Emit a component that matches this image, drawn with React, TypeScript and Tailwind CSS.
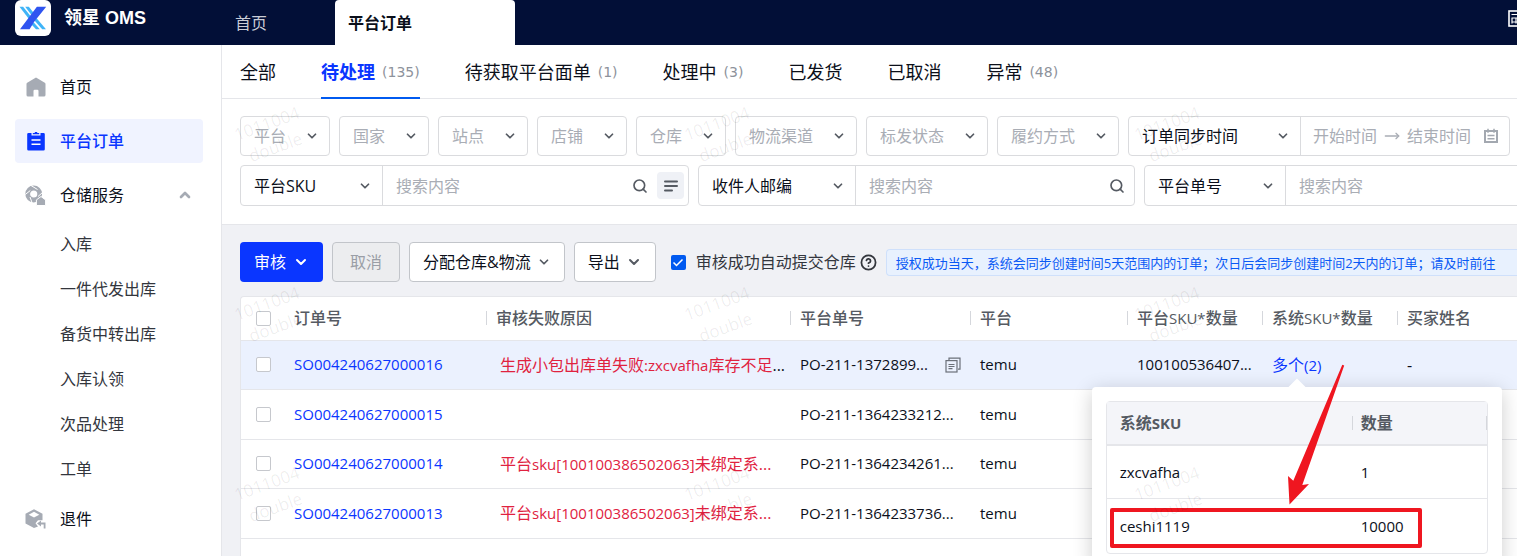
import type { ReactNode } from 'react'
import { ChevronDown, ChevronUp, CircleHelp, MoveRight, Search } from 'lucide-react'

const tabs = [
  { name: '全部' },
  { name: '待处理', count: 135, active: true },
  { name: '待获取平台面单', count: 1 },
  { name: '处理中', count: 3 },
  { name: '已发货' },
  { name: '已取消' },
  { name: '异常', count: 48 },
]

const subMenu = ['入库', '一件代发出库', '备货中转出库', '入库认领', '次品处理', '工单']

const smallFilters = ['平台', '国家', '站点', '店铺', '仓库']
const wideFilters = ['物流渠道', '标发状态', '履约方式']

const columns = ['订单号', '审核失败原因', '平台单号', '平台', '平台SKU*数量', '系统SKU*数量', '买家姓名']

const orders = [
  { id: 'SO004240627000016', reason: '生成小包出库单失败:zxcvafha库存不足', po: 'PO-211-1372899...', platform: 'temu', sku: '100100536407...', multi: true, buyer: '-' },
  { id: 'SO004240627000015', reason: '', po: 'PO-211-1364233212...', platform: 'temu' },
  { id: 'SO004240627000014', reason: '平台sku[100100386502063]未绑定系', po: 'PO-211-1364234261...', platform: 'temu' },
  { id: 'SO004240627000013', reason: '平台sku[100100386502063]未绑定系', po: 'PO-211-1364233736...', platform: 'temu' },
  { id: '', reason: '', po: '', platform: '' },
]

// Latin runs are set one step smaller than the Chinese around them
function Mixed({ text }: { text: string }) {
  const parts = text.split(/([\x21-\x7e]+)/)
  return (
    <>
      {parts.map((p, i) => (i % 2 ? <span key={i} className="text-[15px]">{p}</span> : p))}
    </>
  )
}

function LogoIcon() {
  return (
    <svg viewBox="0 0 36 36" className="size-9">
      <path d="M4.500 6.700h3.600l8.600 10.800-2 2.600z" fill="#3fb4f7" />
      <path d="M10.200 6.700h3.600l5 6.200-2 2.700z" fill="#3fb4f7" />
      <path d="M21.600 18.200l9.400 11.100h-3.800l-7.500-8.600z" fill="#3fb4f7" />
      <path d="M18.600 22.200l6.200 7.100H21l-4.300-4.600z" fill="#3fb4f7" />
      <path d="M21.900 6.700h9.300L19 22 14.600 29.300H5z" fill="#2f54f0" />
    </svg>
  )
}

function HomeIcon() {
  return (
    <svg viewBox="0 0 20 20" className="size-5" fill="#a6abb4">
      <path d="M10 .4 18.800 5.700q.7.5.7 1.300V18q0 1.600-1.600 1.600H12.500V14q0-1.200-1.200-1.200H8.700Q7.500 12.800 7.500 14v5.600H2.100Q.5 19.600.5 18V7q0-.8.7-1.300z" />
    </svg>
  )
}

function OrderIcon() {
  return (
    <svg viewBox="0 0 20 20" className="size-5">
      <path d="M2.500 2h3v2.500h9V2h3q1.300 0 1.300 1.300v14.900q0 1.300-1.300 1.300h-15q-1.300 0-1.300-1.300V3.300Q1.200 2 2.500 2z" fill="#0a36ff" />
      <path d="M6.800 2h2V1h2.400v1h2v1.300H6.800z" fill="#0a36ff" />
      <path d="M5.500 9h9M5.500 13.300h9" stroke="#fff" strokeWidth="1.400" />
    </svg>
  )
}

function WarehouseIcon() {
  return (
    <svg viewBox="0 0 21 21" className="size-[21px]">
      <circle cx="8.700" cy="9" r="6" fill="none" stroke="#a6abb4" strokeWidth="4.800" />
      <path d="M6 .5l6.500 4M17.500 7.500l-4.500 4M.3 9.500l5-4M7 17.500 5 12" stroke="#fff" strokeWidth="1" />
      <path d="M16 11.500l4.600 3.400v5.600h-9.200v-5.600z" fill="#a6abb4" stroke="#fff" strokeWidth="1" />
    </svg>
  )
}

function ReturnIcon() {
  return (
    <svg viewBox="0 0 21 21" className="size-[21px]">
      <path d="M9 .3l8.500 4.500v6.500H13l-2.500 3 2.500 3.200L9 19 .5 14.500V4.800z" fill="#a6abb4" />
      <path d="M9 2.800l5.300 2.900L9 8.600 3.700 5.700z" fill="#fff" />
      <path d="M12 14.500l4-3v2h4.500v6h-1.800v-4H16v2z" fill="#a6abb4" />
    </svg>
  )
}

function CopyIcon() {
  return (
    <svg viewBox="0 0 16 16" className="size-4" fill="none" stroke="#6b7079" strokeWidth="1.200">
      <path d="M4 3.200V1.200h11v11h-2" />
      <rect x="1" y="3.600" width="11" height="11.400" />
      <path d="M3.500 7.500h6M3.500 9.500h6M3.500 11.700h4" />
    </svg>
  )
}

function CalendarIcon() {
  return (
    <svg viewBox="0 0 16 16" className="size-4 shrink-0" fill="none" stroke="#a3a8b0" strokeWidth="2">
      <rect x="2" y="3" width="12" height="11" />
      <path d="M5 .8v4M11 .8v4M4.500 7.500h7M4.500 10.800h7" strokeWidth="1.500" />
    </svg>
  )
}

function GridIcon() {
  return (
    <svg viewBox="0 0 17 17" className="size-[17px] shrink-0" fill="none" stroke="#fff" strokeWidth="1.600">
      <rect x="1" y="1" width="15" height="15" />
      <path d="M3.500 4.500h10M3.500 8h10M3.500 12h10M4 8v5.500M8 8v5.500" strokeWidth="1.200" />
    </svg>
  )
}

function Dropdown({ label, size, dark }: { label: string; size: string; dark?: boolean }) {
  return (
    <div className={`relative h-full shrink-0 ${size}`}>
      <select
        aria-label={label}
        className={`h-full w-full appearance-none bg-transparent pl-[13px] text-base outline-none ${dark ? 'text-[#0b0f1a]' : 'text-[#a9adb5]'}`}
      >
        <option>{label}</option>
      </select>
      <ChevronDown size={14} strokeWidth={3} className="pointer-events-none absolute top-1/2 right-2.5 -translate-y-1/2 text-[#555a62]" />
    </div>
  )
}

const box = 'flex shrink-0 items-center rounded border border-[#dadbde] bg-white'

function SearchBox({ label, size, selectSize, children }: { label: string; size: string; selectSize: string; children?: ReactNode }) {
  return (
    <div className={`${box} h-[41px] ${size}`}>
      <Dropdown label={label} size={selectSize} dark />
      <input
        aria-label={`${label}搜索`}
        placeholder="搜索内容"
        className="h-full min-w-0 flex-1 border-l border-[#dadbde] pl-[13px] text-base outline-none placeholder:text-[#a9adb5]"
      />
      <button aria-label="搜索" className="mr-[9px] text-[#555a62]">
        <Search size={16} strokeWidth={2.500} />
      </button>
      {children}
    </div>
  )
}

function Sidebar() {
  const item = 'mb-2.5 flex h-11 items-center gap-3.5 rounded pl-[11px]'
  return (
    <aside className="w-[222px] shrink-0 border-r border-[#e5e6ea] bg-white pt-5 pr-[18px] pl-[15px] text-base text-[#0b0f1a]">
      <nav>
        <a href="#" className={item}><HomeIcon />首页</a>
        <a href="#" className={`${item} bg-[#f0f3ff] font-medium text-[#0a36ff]`}><OrderIcon />平台订单</a>
        <button className="flex h-11 w-full items-center gap-3.5 pr-2.5 pl-2.5">
          <WarehouseIcon />仓储服务
          <ChevronUp size={16} strokeWidth={4} className="ml-auto text-[#a6abb4]" />
        </button>
        <div className="pt-1 pb-1.5">
          {subMenu.map((m) => (
            <a key={m} href="#" className="flex h-[45px] items-center pl-[45px] text-[#33363d]">{m}</a>
          ))}
        </div>
        <a href="#" className="flex h-11 items-center gap-3.5 pl-2.5"><ReturnIcon />退件</a>
      </nav>
    </aside>
  )
}

function SkuPopover() {
  const sep = 'h-3.5 border-l border-[#d5d7dc]'
  return (
    <div className="absolute top-full left-1/2 z-10 mt-2.5 w-[410px] -translate-x-1/2 rounded bg-white p-3.5 text-[#0b0f1a] shadow-[0_4px_20px_rgba(0,0,0,0.2)]">
      <div className="absolute -top-1.5 left-1/2 size-3 -translate-x-1/2 rotate-45 bg-white" />
      <div className="relative rounded border border-[#e5e6ea]">
        <table className="w-full table-fixed text-left">
          <colgroup>
            <col className="w-[245px]" />
            <col />
          </colgroup>
          <thead>
            <tr className="h-[43px] border-b-2 border-[#e5e6ea] bg-[#f4f5f9] text-[#555a62]">
              <th className="pl-[13px] font-bold"><Mixed text="系统SKU" /></th>
              <th className="font-bold">
                <div className="flex items-center gap-2">
                  <span className={sep} />数量<span className={`ml-auto ${sep}`} />
                </div>
              </th>
            </tr>
          </thead>
          <tbody className="text-[15px]">
            <tr className="h-[54px] border-b border-[#e5e6ea]"><td className="pl-[13px]">zxcvafha</td><td className="pl-[9px]">1</td></tr>
            <tr className="h-[54px]"><td className="pl-[13px]">ceshi1119</td><td className="pl-[9px]">10000</td></tr>
          </tbody>
        </table>
      </div>
      {/* red marks over the second row */}
      <div className="absolute top-[121px] left-[18px] h-10 w-[312px] rounded-xs border-4 border-[#ef1620]" />
      <svg viewBox="0 0 70 150" className="absolute -top-[26px] left-[191px] h-[150px] w-[70px]">
        <path d="M59.300 3.800l1.900.7L19.300 124l6.700-1L6.500 143.500 5 115l5.300 4.800z" fill="#ef1620" />
      </svg>
    </div>
  )
}

const check = 'block size-[15px] appearance-none rounded-xs border border-[#c6c8cd] bg-white'

function OrderTable() {
  return (
    <div className="mt-3.5 ml-[18px] rounded-tl border-t border-l border-[#e5e6ea] bg-white">
      <table className="w-full table-fixed text-left text-base text-[#0b0f1a]">
        <colgroup>
          <col className="w-[43px]" />
          <col className="w-[202px]" />
          <col className="w-[304px]" />
          <col className="w-[180px]" />
          <col className="w-[157px]" />
          <col className="w-[135px]" />
          <col className="w-[135px]" />
          <col />
        </colgroup>
        <thead>
          <tr className="h-[43px] border-b border-[#e5e6ea] text-[#555a62]">
            <th className="pl-[15px]"><input type="checkbox" aria-label="全选" className={check} /></th>
            {columns.map((c, i) => (
              <th key={c} className="font-medium whitespace-nowrap">
                <div className="flex items-center">
                  <span className={`mr-[9px] h-3.5 border-l ${i ? 'border-[#d5d7dc]' : 'border-transparent'}`} />
                  <span><Mixed text={c} /></span>
                </div>
              </th>
            ))}
          </tr>
        </thead>
        <tbody>
          {orders.map((o, i) => (
            <tr key={i} className={`h-[49px] border-b border-[#e5e6ea] whitespace-nowrap even:h-[50px] ${i === 0 ? 'bg-[#ebf1fe]' : ''}`}>
              <td className="pl-[15px]">{o.id && <input type="checkbox" aria-label={o.id} className={check} />}</td>
              <td className="pl-2.5 text-[15px]"><a href="#" className="text-[#0a36ff]">{o.id}</a></td>
              <td className="pl-3.5 text-[#e0223f]">
                {o.reason && <><Mixed text={o.reason} /><span className={i === 0 ? 'text-[#0b0f1a]' : ''}>...</span></>}
              </td>
              <td className="pl-2.5 text-[15px]">
                <div className="flex items-center justify-between pr-[9px]">
                  {o.po}
                  {o.multi && <button aria-label="复制"><CopyIcon /></button>}
                </div>
              </td>
              <td className="pl-2.5 text-[15px]">{o.platform}</td>
              <td className="pl-2.5 text-[15px]">{o.sku}</td>
              <td className="pl-2.5">
                {o.multi && (
                  <div className="relative inline-block">
                    <a href="#" className="text-[#0a36ff]"><Mixed text="多个(2)" /></a>
                    <SkuPopover />
                  </div>
                )}
              </td>
              <td className="pl-2.5">{o.buyer}</td>
            </tr>
          ))}
        </tbody>
      </table>
    </div>
  )
}

function Watermark() {
  return (
    <div aria-hidden="true" className="pointer-events-none absolute inset-0 z-20 grid auto-rows-[180px] grid-cols-[repeat(3,450px)] overflow-hidden">
      {Array.from({ length: 9 }, (_, i) => (
        <div key={i} className="flex items-center">
          <div className="w-[98px] -rotate-20 text-center text-[17px] leading-[25px] font-medium text-black/7">
            1011004<br />double
          </div>
        </div>
      ))}
    </div>
  )
}

function App() {
  const outline = 'flex h-10 shrink-0 items-center gap-1.5 rounded border border-[#c2c5ca] bg-white px-[13px] text-[#0b0f1a]'
  return (
    <div className="flex h-screen flex-col overflow-hidden font-['Open_Sans','Noto_Sans_CJK_SC',sans-serif]">
      <header className="flex h-[45px] shrink-0 overflow-hidden bg-[#020f37] text-base text-white">
        <div className="flex w-[222px] items-start pl-[15px]">
          <div className="rounded-md bg-white"><LogoIcon /></div>
          <div className="ml-[13px] font-['Liberation_Sans','Noto_Sans_CJK_SC',sans-serif] text-[18px] leading-9 font-bold">领星 OMS</div>
        </div>
        <a href="#" className="flex w-[113px] items-center pl-[13px] text-[#c9ccd6]">首页</a>
        <a href="#" className="flex w-[180px] items-center rounded-t bg-white pl-[13px] font-bold text-[#0b0f1a]">平台订单</a>
        <button aria-label="报表" className="-mr-2 ml-auto flex items-start pt-2.5"><GridIcon /></button>
      </header>

      <div className="flex min-h-0 flex-1">
        <Sidebar />
        <main className="relative min-w-0 flex-1 overflow-hidden bg-[#f0f1f5]">
          <nav className="flex h-[54px] gap-[45px] border-b border-[#e5e6ea] bg-white pl-[18px] text-[18px] whitespace-nowrap text-[#0b0f1a]">
            {tabs.map((t) => (
              <a key={t.name} href="#" className={`-mb-px flex items-center gap-[7px] border-b-2 pt-0.5 ${t.active ? 'border-[#005af0]' : 'border-transparent'}`}>
                <span className={t.active ? 'font-bold text-[#0a36ff]' : ''}>{t.name}</span>
                {t.count && <span className="font-['DejaVu_Sans',sans-serif] text-sm text-[#8d929b]">({t.count})</span>}
              </a>
            ))}
          </nav>

          {/* Filters */}
          <section className="space-y-[9px] border-b border-[#e5e6ea] bg-white pt-[17px] pb-[18px] pl-[18px]">
            <div className="flex gap-[9px]">
              {smallFilters.map((f) => (
                <div key={f} className={`${box} h-10`}><Dropdown label={f} size="w-[88px]" /></div>
              ))}
              {wideFilters.map((f) => (
                <div key={f} className={`${box} h-10`}><Dropdown label={f} size="w-[120px]" /></div>
              ))}
              <div className={`${box} h-10 w-[382px]`}>
                <Dropdown label="订单同步时间" size="w-[171px]" dark />
                <div className="flex h-full flex-1 items-center border-l border-[#dadbde] pr-2.5 pl-3">
                  <input aria-label="开始时间" placeholder="开始时间" className="w-[71px] text-base outline-none placeholder:text-[#a9adb5]" />
                  <MoveRight size={16} className="mr-[7px] shrink-0 text-[#a9adb5]" />
                  <input aria-label="结束时间" placeholder="结束时间" className="w-[76px] text-base outline-none placeholder:text-[#a9adb5]" />
                  <CalendarIcon />
                </div>
              </div>
            </div>
            <div className="flex gap-[9px]">
              <SearchBox label="平台SKU" size="w-[449px]" selectSize="w-[141px]">
                <button aria-label="批量搜索" className="mr-1 flex size-[27px] items-center justify-center rounded bg-[#eff1f6]">
                  <svg viewBox="0 0 14 12" className="h-3 w-3.5" stroke="#555a62" strokeWidth="2" strokeLinecap="round">
                    <path d="M1 1.500h12M1 6h12M1 10.500h7" />
                  </svg>
                </button>
              </SearchBox>
              <SearchBox label="收件人邮编" size="w-[437px]" selectSize="w-[156px]" />
              <SearchBox label="平台单号" size="w-[437px]" selectSize="w-[140px]" />
            </div>
          </section>

          {/* Actions */}
          <div className="mt-[17px] flex items-center gap-[9px] pl-[18px] text-base whitespace-nowrap">
            <button className="flex h-10 shrink-0 items-center gap-[7px] rounded bg-[#0a36ff] px-3.5 text-white">
              审核 <ChevronDown size={16} strokeWidth={3} />
            </button>
            <button disabled className="h-10 w-[68px] shrink-0 rounded border border-[#c2c5ca] bg-[#ecedef] text-[#9a9ea6]">取消</button>
            <button className={outline}><span>分配仓库&amp;物流</span><ChevronDown size={14} strokeWidth={3} className="text-[#555a62]" /></button>
            <button className={outline}>导出 <ChevronDown size={16} strokeWidth={3} className="text-[#555a62]" /></button>
            <label className="ml-1.5 flex shrink-0 items-center text-[#33363d]">
              <span className="relative mr-2.5">
                <input type="checkbox" defaultChecked className="block size-[15px] appearance-none rounded-xs bg-[#005af0]" />
                <svg viewBox="0 0 15 15" className="pointer-events-none absolute inset-0 size-[15px]" fill="none" stroke="#fff" strokeWidth="1.500">
                  <path d="M2.500 7.500l3 3 6-6" />
                </svg>
              </span>
              审核成功自动提交仓库
              <CircleHelp size={17} strokeWidth={2.500} className="ml-1" />
            </label>
            <div className="h-[27px] flex-1 overflow-hidden rounded-l border border-r-0 border-[#cfe0fb] bg-[#e8f1fe] pl-[9px] text-[13px] leading-[26px] text-[#0a5af5]">
              授权成功当天，系统会同步创建时间5天范围内的订单；次日后会同步创建时间2天内的订单；请及时前往
            </div>
          </div>

          <OrderTable />
          <Watermark />
        </main>
      </div>
    </div>
  )
}

export default App
